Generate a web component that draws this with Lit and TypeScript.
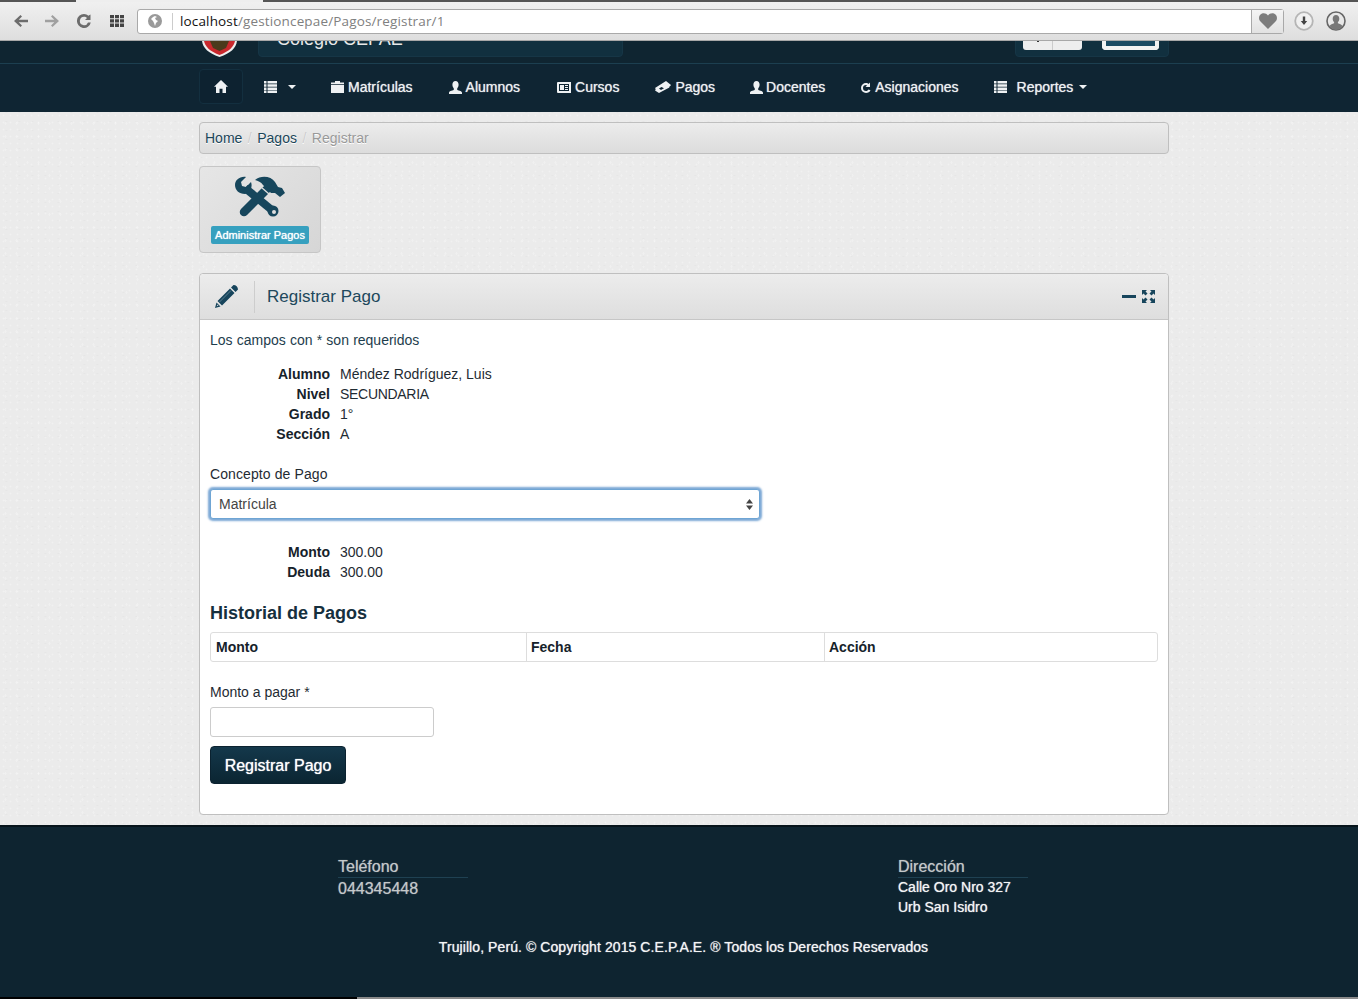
import { LitElement, html, css, svg } from 'lit';
import { customElement } from 'lit/decorators.js';

const icon = (w: number, h: number, body: unknown, vb = `0 0 ${w} ${h}`) =>
  html`<svg class="ic" width=${w} height=${h} viewBox=${vb} fill="currentColor">${body}</svg>`;

const listIcon = icon(13, 12, svg`<path d="M0 0h2.500v2.500H0zM3.500 0H13v2.500H3.500zM0 3.200h2.500v2.500H0zM3.500 3.200H13v2.500H3.500zM0 6.400h2.500v2.500H0zM3.500 6.400H13v2.500H3.500zM0 9.600h2.500V12H0zM3.500 9.600H13V12H3.500z"/>`);
const userIcon = icon(13, 13, svg`<path d="M6.500 0C8.400 0 9.600 1.500 9.600 3.600c0 1.600-.6 3-1.400 3.800v1.300c0 .5 4.800 1 4.800 3V13H0v-1.300c0-2 4.800-2.500 4.800-3V7.400C4 6.600 3.400 5.200 3.400 3.600 3.400 1.500 4.600 0 6.500 0z"/>`);

@customElement('app-root')
export class AppRoot extends LitElement {
  static styles = css`
    :host {
      display: block;
      font-family: 'Liberation Sans', Arial, sans-serif;
      font-size: 14px;
      line-height: 20px;
      color: #222;
      background-color: #ebebeb;
      background-image:
        radial-gradient(rgba(255, 255, 255, 0.3) 0.7px, transparent 1.2px),
        radial-gradient(rgba(255, 255, 255, 0.25) 0.8px, transparent 1.3px),
        radial-gradient(rgba(0, 0, 0, 0.02) 0.8px, transparent 1.2px);
      background-size: 7px 7px, 11px 13px, 13px 9px;
    }
    .ic { display: block; flex: none; }

    /* browser chrome */
    .chrome {
      height: 41px;
      box-sizing: border-box;
      display: flex;
      flex-direction: column;
      background: linear-gradient(#f1f1f1, #dedede);
      border-bottom: 1px solid #a8a8a8;
      color: #6c6c6c;
    }
    .tabs { height: 2px; display: flex; flex: none; }
    .tabs i { background: #555; }
    .tabs i:nth-child(1) { width: 76px; }
    .tabs i:nth-child(2) { width: 187px; background: #eee; }
    .tabs i:nth-child(3) { flex: 1; }
    .toolbar { flex: 1; display: flex; align-items: center; }
    .nav-btn { width: 16px; margin-left: 13px; display: flex; justify-content: center; }
    .nav-btn.fwd { margin-left: 15px; color: #a0a0a0; }
    .nav-btn.rel { margin-left: 16px; }
    .nav-btn.apps { margin-left: 17px; color: #444; }
    .omni {
      margin-left: 12px;
      width: 1147px;
      height: 25px;
      box-sizing: border-box;
      background: #fff;
      border: 1px solid #a9a9a9;
      border-radius: 3px;
      display: flex;
      align-items: center;
      font-family: 'Open Sans', 'Liberation Sans', sans-serif;
      font-size: 13.5px;
    }
    .globe { margin-left: 10px; color: #9a9a9a; }
    .omni-sep { width: 1px; height: 17px; background: #ccc; margin: 0 7px 0 10px; }
    .url { color: #808080; flex: 1; letter-spacing: 0.15px; }
    .url b { color: #111; font-weight: 400; }
    .heart-cell {
      width: 31px;
      height: 100%;
      border-left: 1px solid #a9a9a9;
      background: linear-gradient(#f4f4f4, #e2e2e2);
      display: flex;
      align-items: center;
      justify-content: center;
      color: #7d7d7d;
    }
    .dl { margin-left: 10px; }
    .prof { margin-left: 12px; }

    /* header, scrolled up under the chrome */
    .top {
      height: 23px;
      box-sizing: border-box;
      background: #0f2531;
      border-bottom: 1px solid #1c3f50;
      overflow: hidden;
    }
    .top-in {
      width: 970px;
      margin-left: 199px;
      height: 22px;
      display: flex;
      align-items: flex-end;
    }
    .shield { margin: 0 0 6px 3px; }
    .brand {
      margin: 0 0 6px 21px;
      width: 365px;
      height: 30px;
      box-sizing: border-box;
      padding-left: 18px;
      background: #11303f;
      border: 1px solid #163646;
      border-radius: 4px;
      color: #e8e8e8;
      font-size: 18px;
      line-height: 22px;
      white-space: nowrap;
    }
    .tools {
      margin: 0 0 6px auto;
      width: 154px;
      height: 30px;
      box-sizing: border-box;
      background: #11303f;
      border: 1px solid #163646;
      border-radius: 4px;
      display: flex;
      align-items: flex-end;
      padding: 0 8px 6px 7px;
    }
    .seg { width: 59px; height: 20px; background: #eee; border-radius: 0 0 3px 3px; display: flex; }
    .seg i { flex: 1; display: flex; justify-content: center; align-items: flex-end; padding-bottom: 8px; }
    .seg i + i { border-left: 1px solid #ccc; }
    .seg u { width: 2px; height: 2px; background: #333; }
    .blue {
      margin-left: 20px;
      width: 57px;
      height: 20px;
      box-sizing: border-box;
      background: #1a4a62;
      border: solid #f2f2f2;
      border-width: 0 4px 4px;
      border-radius: 0 0 4px 4px;
    }

    /* main nav */
    nav { height: 48px; background: #0f2533; }
    .nav-in {
      width: 970px;
      margin-left: 199px;
      height: 100%;
      box-sizing: border-box;
      padding-bottom: 2px;
      display: flex;
      align-items: center;
      color: #eef1f3;
      text-shadow: 0 0 1px rgba(255, 255, 255, 0.8);
    }
    .home {
      width: 44px;
      height: 35px;
      margin-top: -2px;
      box-sizing: border-box;
      background: #0d2230;
      border: 1px solid #132f3f;
      border-radius: 4px;
      display: flex;
      align-items: center;
      justify-content: center;
    }
    .item { display: flex; align-items: center; padding: 0 18px; }
    .item .ic { margin-right: 4px; }
    .item.usr .ic { margin-right: 3px; }
    .item.alu { padding-right: 19px; }
    .item.alu .ic { margin-right: 4px; }
    .item.pag, .item.asi { padding-right: 17px; }
    .item.lst { padding: 0 17px 0 21px; }
    .item.lst .ic { margin-right: 11px; }
    .item.rep .ic { margin-right: 10px; }
    .caret {
      width: 0;
      height: 0;
      border: 4px solid transparent;
      border-top-color: #eef1f3;
      border-bottom: 0;
    }
    .item.rep .caret { margin-left: 6px; }

    /* page */
    main { width: 970px; margin-left: 199px; padding: 10px 0; height: 693px; }
    .crumbs {
      height: 32px;
      box-sizing: border-box;
      padding-left: 5px;
      display: flex;
      align-items: center;
      background: linear-gradient(#ececec, #dcdcdc);
      border: 1px solid #bfbfbf;
      border-radius: 4px;
      color: #1b4659;
      text-shadow: 0 1px 0 #fff;
    }
    .crumbs s { text-decoration: none; color: #ccc; padding: 0 5.5px; }
    .crumbs em { font-style: normal; color: #999; }
    .tile {
      margin-top: 12px;
      width: 122px;
      height: 87px;
      box-sizing: border-box;
      padding-top: 9px;
      display: flex;
      flex-direction: column;
      align-items: center;
      background: linear-gradient(135deg, #e6e6e6, #d6d6d6);
      border: 1px solid #c6c6c6;
      border-radius: 4px;
    }
    .badge {
      margin-top: 8px;
      width: 98px;
      height: 18px;
      background: #36a0bf;
      border-radius: 2px;
      color: #fff;
      font-size: 11px;
      line-height: 18px;
      text-align: center;
      text-shadow: 0 0 1px #fff;
      white-space: nowrap;
    }
    .box {
      margin-top: 20px;
      height: 542px;
      box-sizing: border-box;
      background: #fff;
      border: 1px solid #bfbfbf;
      border-radius: 4px;
    }
    .box-head {
      height: 46px;
      box-sizing: border-box;
      display: flex;
      align-items: center;
      background: linear-gradient(#ececec, #dedede);
      border-bottom: 1px solid #c6c6c6;
      border-radius: 4px 4px 0 0;
      color: #17455c;
    }
    .pencil { margin-left: 15px; }
    .head-sep { width: 1px; height: 32px; background: #cdcdcd; margin: 0 12px 0 16px; }
    .box-title { flex: 1; font-size: 17px; color: #20485c; }
    .mini { margin-right: 6px; }
    .full { margin-right: 13px; }
    .box-body { padding: 10px 10px 0; }
    .req { color: #1e3d4d; word-spacing: 0.3px; }
    dl { margin: 14px 0 0; display: grid; grid-template-columns: 120px 1fr; column-gap: 10px; }
    dt { font-weight: 700; text-align: right; color: #16222a; }
    dd { margin: 0; color: #1f2b33; }
    dd.tight { letter-spacing: -0.3px; }
    label { display: block; color: #1f2b33; }
    .lbl1 { margin-top: 20px; letter-spacing: 0.1px; }
    .select-wrap { position: relative; width: 550px; margin-top: 5px; }
    select {
      display: block;
      width: 100%;
      height: 30px;
      box-sizing: border-box;
      padding: 0 8px;
      appearance: none;
      -webkit-appearance: none;
      background: #fff;
      border: 1px solid #6fa5d4;
      border-radius: 3px;
      box-shadow: 0 0 2px 2px rgba(82, 140, 200, 0.75);
      font: 14px 'Liberation Sans', Arial, sans-serif;
      color: #444;
      outline: none;
    }
    .updown { position: absolute; top: 10px; right: 7px; color: #444; }
    .dl2 { margin-top: 23px; }
    h3 { margin: 21px 0 0; font-size: 18px; line-height: 20px; font-weight: 700; color: #16303e; }
    table {
      margin: 9px 0 0;
      width: 948px;
      height: 30px;
      border-collapse: separate;
      border-spacing: 0;
      border: 1px solid #ddd;
      border-radius: 3px;
      table-layout: fixed;
    }
    th { text-align: left; font-weight: 700; padding: 0 5px; color: #16222a; }
    th + th { border-left: 1px solid #ddd; padding-left: 4px; }
    .lbl2 { margin-top: 20px; }
    input {
      display: block;
      margin-top: 5px;
      width: 224px;
      height: 30px;
      box-sizing: border-box;
      background: #fff;
      border: 1px solid #ccc;
      border-radius: 3px;
      outline: none;
    }
    button {
      display: block;
      margin-top: 9px;
      width: 136px;
      height: 38px;
      padding: 2px 0 0;
      background: linear-gradient(#14384b, #0b2532);
      border: 1px solid #0b2230;
      border-radius: 4px;
      color: #fff;
      font: 16px 'Liberation Sans', Arial, sans-serif;
      text-shadow: 0 0 1px rgba(255, 255, 255, 0.9);
    }

    /* footer */
    footer {
      height: 172px;
      box-sizing: border-box;
      background: #0e2430;
      border-top: 2px solid #07141b;
      color: #c4c8ca;
      padding-top: 30px;
      text-shadow: 0 0 1px rgba(255, 255, 255, 0.5);
    }
    .cols { display: flex; padding-left: 338px; }
    .col { flex: none; width: 560px; }
    .col + .col { width: 130px; }
    .col h4 {
      margin: 0;
      width: 130px;
      height: 21px;
      font-size: 16px;
      line-height: 20px;
      font-weight: 400;
      border-bottom: 1px solid #1f4152;
      box-sizing: border-box;
    }
    .tel { font-size: 16px; line-height: 20px; margin-top: 1px; }
    .addr { color: #f4f5f6; text-shadow: 0 0 1px rgba(255, 255, 255, 0.8); }
    .addr.first { margin-top: -1px; }
    .copy {
      margin-top: 20px;
      padding-left: 9px;
      text-align: center;
      letter-spacing: 0.08px;
      color: #f4f5f6;
      text-shadow: 0 0 1px rgba(255, 255, 255, 0.8);
    }
    .edge { height: 2px; display: flex; }
    .edge i { width: 357px; background: #000; }
    .edge b { flex: 1; background: #8a8a8a; }
  `;

  render() {
    return html`
      <div class="chrome">
        <div class="tabs"><i></i><i></i><i></i></div>
        <div class="toolbar">
          <div class="nav-btn">${icon(14, 12, svg`<path d="M6.500 0 8 1.500 4.700 4.700H14v2.600H4.700L8 10.500 6.500 12 0 6z"/>`)}</div>
          <div class="nav-btn fwd">${icon(14, 12, svg`<path d="M7.500 0 6 1.500 9.300 4.700H0v2.600h9.300L6 10.500 7.500 12 14 6z"/>`)}</div>
          <div class="nav-btn rel">${icon(14, 14, svg`<path d="M7 0c1.800 0 3.200.7 4.300 1.800L13.500.500V6H8l2-2C9.300 3.300 8.300 2.800 7 2.800A4.200 4.200 0 1 0 11 8.500h2.800A7 7 0 1 1 7 0z"/>`)}</div>
          <div class="nav-btn apps">${icon(14, 12, svg`<path d="M0 0h4v3.300H0zM5 0h4v3.300H5zM10 0h4v3.300h-4zM0 4.300h4v3.300H0zM5 4.300h4v3.300H5zM10 4.300h4v3.300h-4zM0 8.600h4V12H0zM5 8.600h4V12H5zM10 8.600h4V12h-4z"/>`)}</div>
          <div class="omni">
            <span class="globe">${icon(14, 14, svg`<path fill-rule="evenodd" d="M7 0a7 7 0 1 1 0 14A7 7 0 0 1 7 0zM5 3 3 5l2 2 1 2 1 3 1-3 2-2-2-1-1-2 2-1-2-1z"/>`)}</span>
            <span class="omni-sep"></span>
            <span class="url"><b>localhost</b>/gestioncepae/Pagos/registrar/1</span>
            <span class="heart-cell">${icon(18, 16, svg`<path d="M9 16 1.500 8.500C-.5 6.500-.4 3.200 1.500 1.500 3.500-.4 7-.4 9 2.500c2-2.900 5.500-2.900 7.500-1 1.900 1.700 2 5 0 7z"/>`)}</span>
          </div>
          <span class="dl">${icon(20, 20, svg`<circle cx="10" cy="10" r="8.800" fill="#f0f0f0" stroke="#b5b5b5" stroke-width="1.800"/><path fill="#444" d="M8.800 5.500h2.400v4.500h2L10 14 6.800 10h2z"/>`)}</span>
          <span class="prof">${icon(20, 20, svg`<circle cx="10" cy="10" r="9" fill="#e8e8e8" stroke="#666" stroke-width="1.600"/><path fill="#777" d="M10 4c2 0 3.300 1.500 3.300 3.700 0 1.500-.6 2.700-1.400 3.400v1.100c1.700.7 3.700 1.300 4.500 2.700A8.600 8.600 0 0 1 10 18.800a8.600 8.600 0 0 1-6.400-3.900c.8-1.400 2.800-2 4.500-2.700v-1.100c-.8-.7-1.400-1.900-1.400-3.400C6.700 5.500 8 4 10 4z"/>`)}</span>
        </div>
      </div>

      <div class="top">
        <div class="top-in">
          <span class="shield"><svg class="ic" width="35" height="16" viewBox="0 0 35 16"><path fill="#eee" d="M0 0h35c-1 7-6 12-17.500 16C6 12 1 7 0 0z"/><path fill="#c9282d" d="M2 0h31c-1 5-5 10-15.500 14C7 10 3 5 2 0z"/><path fill="#4a3a1c" d="M8 0h19l-3 7-6.500 3L11 7z"/></svg></span>
          <div class="brand">Colegio CEPAE</div>
          <div class="tools">
            <div class="seg"><i><u></u></i><i></i></div>
            <div class="blue"></div>
          </div>
        </div>
      </div>

      <nav>
        <div class="nav-in">
          <div class="home">${icon(14, 13, svg`<path d="M7 0 14 6.800h-2V13H8.500V8.800h-3V13H2V6.800H0z"/>`)}</div>
          <div class="item lst">${listIcon}<span class="caret"></span></div>
          <div class="item">${icon(13, 12, svg`<path d="M4 0h5v1.500h4V12H0V1.500h4zM0 3.300h13v.8H0z" fill-rule="evenodd"/>`)}Matrículas</div>
          <div class="item alu">${userIcon}Alumnos</div>
          <div class="item">${icon(14, 11, svg`<path fill-rule="evenodd" d="M1 0h13v11H1a1 1 0 0 1-1-1V1a1 1 0 0 1 1-1zm1 2v7h10V2zm1 1h4v5H3zm5 0h3v1H8zm0 2h3v1H8zm0 2h3v1H8z"/>`)}Cursos</div>
          <div class="item pag">${icon(16, 12, svg`<path fill-rule="evenodd" d="M0 7 11 0l5 4-1 1.200c-.6 0-1 .8-.6 1.300L4 12 0 9.500c.8-.5.8-1.800 0-2.500zm6.500-1L4 7.500 6 9l3-1.700z"/>`)}Pagos</div>
          <div class="item usr">${userIcon}Docentes</div>
          <div class="item asi">${icon(10, 12, svg`<path d="M5 2c1 0 2 .3 2.600 1L9 1.500V6H4.500L6 4.500C5.700 4.200 5.400 4 5 4a3 3 0 0 0 0 6c1.200 0 2-.6 2.500-1.500l2 .8C8.800 11 7 12 5 12A5 5 0 0 1 5 2z"/>`)}Asignaciones</div>
          <div class="item rep">${listIcon}Reportes<span class="caret"></span></div>
        </div>
      </nav>

      <main>
        <div class="crumbs">Home<s>/</s>Pagos<s>/</s><em>Registrar</em></div>
        <div class="tile">
          <svg class="ic" width="50" height="42" viewBox="0 0 50 42" fill="#16465c">
            <path d="M11 1 6 6l1 4 4 1 5-5c2 5-1 11-6 12C4 18 0 14 0 9 0 4 5 0 11 1z"/>
            <path d="M10 12 38 35" stroke="#16465c" stroke-width="8" fill="none"/>
            <circle cx="38" cy="35" r="5.500"/>
            <circle cx="39" cy="36" r="2" fill="#dedede"/>
            <path d="M31 14 9 36" stroke="#16465c" stroke-width="8.500" stroke-linecap="round" fill="none"/>
            <path d="M20 4C26-1 36 0 40 6l3 5 4 1 3 5-5 4-5-4h-4l-8-8c-2-3-5-4-8-5z"/>
            <path d="M26 11l8 7" stroke="#dedede" stroke-width="1.300" fill="none"/>
          </svg>
          <div class="badge">Administrar Pagos</div>
        </div>

        <section class="box">
          <div class="box-head">
            <span class="pencil">${icon(23, 23, svg`<path d="M18.500 0c2.500 0 4.500 2 4.500 4.500l-2.500 2.500-4.500-4.500zM15 3.500 19.500 8 7 20.500 2.500 16z"/><path fill-rule="evenodd" d="M1.500 17.500 5.500 21.500 0 23zM2.500 19.500l-.8 1.800 1.800-.8z"/><path d="M4.500 17 16 5.500" stroke="#6d8b9a" stroke-width=".8"/>`)}</span>
            <span class="head-sep"></span>
            <span class="box-title">Registrar Pago</span>
            <span class="mini">${icon(14, 3, svg`<path d="M0 0h14v3H0z"/>`)}</span>
            <span class="full">${icon(13, 13, svg`<path d="M0 0h5L3.500 1.500 5.500 3.500 3.500 5.500 1.500 3.500 0 5zM13 0v5L11.500 3.500 9.500 5.500 7.500 3.500 9.500 1.500 8 0zM0 13V8l1.500 1.500 2-2 2 2-2 2L5 13zM13 13H8l1.500-1.500-2-2 2-2 2 2L13 8z"/>`)}</span>
          </div>
          <div class="box-body">
            <div class="req">Los campos con * son requeridos</div>
            <dl>
              <dt>Alumno</dt><dd>Méndez Rodríguez, Luis</dd>
              <dt>Nivel</dt><dd class="tight">SECUNDARIA</dd>
              <dt>Grado</dt><dd>1°</dd>
              <dt>Sección</dt><dd>A</dd>
            </dl>
            <label class="lbl1">Concepto de Pago</label>
            <div class="select-wrap">
              <select><option>Matrícula</option></select>
              <span class="updown">${icon(7, 11, svg`<path d="M3.500 0 7 4.500H0zM3.500 11 0 6.500h7z"/>`)}</span>
            </div>
            <dl class="dl2">
              <dt>Monto</dt><dd>300.00</dd>
              <dt>Deuda</dt><dd>300.00</dd>
            </dl>
            <h3>Historial de Pagos</h3>
            <table>
              <colgroup><col style="width:315px" /><col style="width:298px" /><col /></colgroup>
              <tr><th>Monto</th><th>Fecha</th><th>Acción</th></tr>
            </table>
            <label class="lbl2">Monto a pagar *</label>
            <input type="text" />
            <button>Registrar Pago</button>
          </div>
        </section>
      </main>

      <footer>
        <div class="cols">
          <div class="col">
            <h4>Teléfono</h4>
            <div class="tel">044345448</div>
          </div>
          <div class="col">
            <h4>Dirección</h4>
            <div class="addr first">Calle Oro Nro 327</div>
            <div class="addr">Urb San Isidro</div>
          </div>
        </div>
        <div class="copy">Trujillo, Perú. © Copyright 2015 C.E.P.A.E. ® Todos los Derechos Reservados</div>
      </footer>
      <div class="edge"><i></i><b></b></div>
    `;
  }
}
